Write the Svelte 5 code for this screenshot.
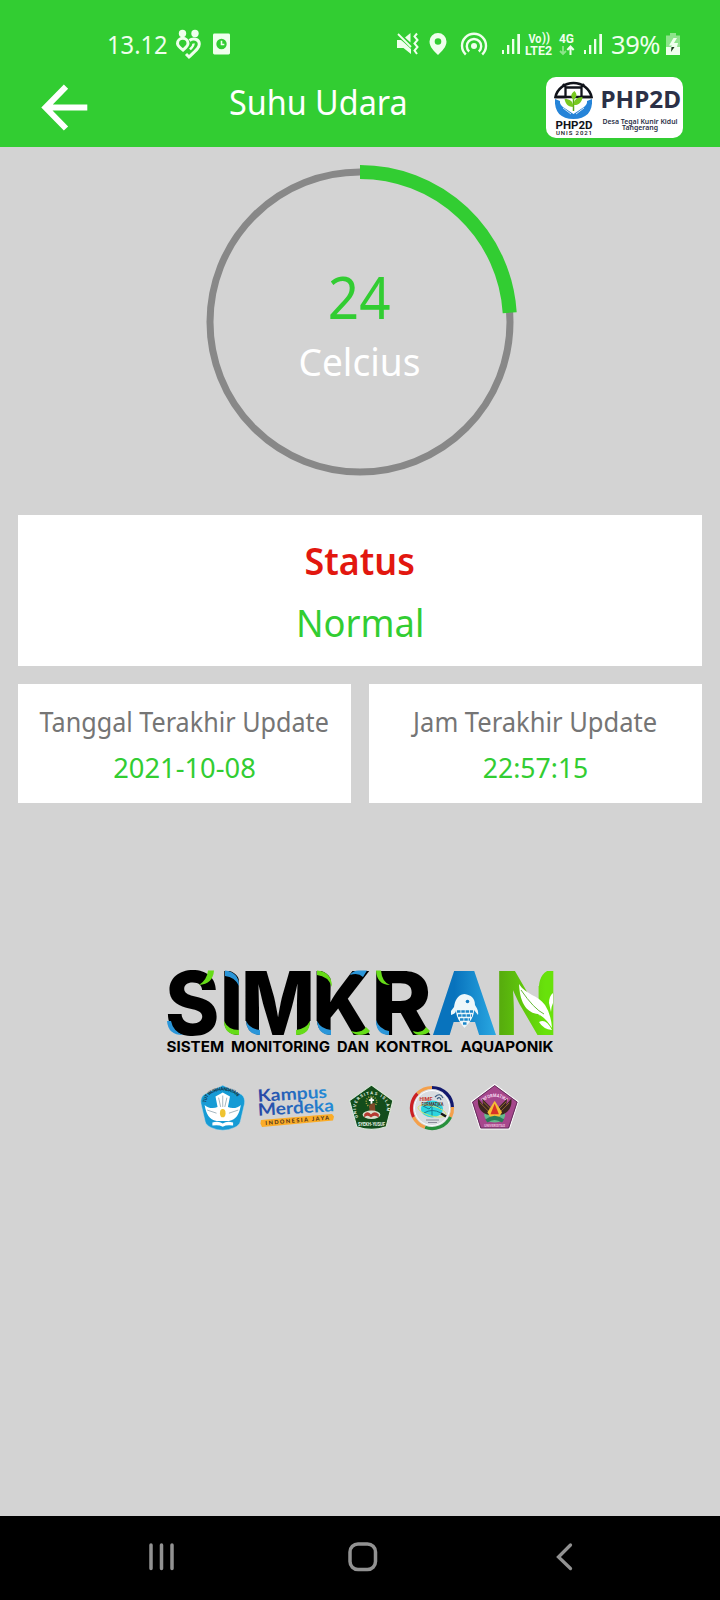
<script>
  const percent = 24;
  const radius = 150;
  const length = 2 * Math.PI * radius;

  const updates = [
    { label: 'Tanggal Terakhir Update', value: '2021-10-08', kind: 'date' },
    { label: 'Jam Terakhir Update', value: '22:57:15', kind: 'time' }
  ];

  const tagline = [
    { text: 'SISTEM', x: 166.5, width: 57.5 },
    { text: 'MONITORING', x: 231, width: 99 },
    { text: 'DAN', x: 337, width: 32 },
    { text: 'KONTROL', x: 375.5, width: 77 },
    { text: 'AQUAPONIK', x: 460.5, width: 93 }
  ];
</script>

{#snippet signal()}
  <svg class="signal" viewBox="0 0 20 22" width="20" height="22">
    <rect x="1" y="17" width="2" height="4" />
    <rect x="6" y="12" width="2.3" height="9" />
    <rect x="11" y="6" width="2.3" height="15" />
    <rect x="16.3" y="1" width="2.7" height="20" />
  </svg>
{/snippet}

<div class="screen">
  <header>
    <div class="status-bar">
      <span class="clock">13.12</span>
      <svg class="hearts" viewBox="0 0 28 32" width="28" height="32">
        <circle cx="8.5" cy="4.5" r="3.7" fill="#efffed" />
        <circle cx="21" cy="4.5" r="3.7" fill="#efffed" />
        <path d="M9 21C5.500 18.500 3.500 17 3.500 14.500A5.200 5.200 0 0 1 14 14.500C14 17 12 18.500 9 21ZM15.500 11.500C18.500 9 25.300 9.500 25.300 15C25.300 18.500 23 20.500 15 28L12 25" fill="none" stroke="#efffed" stroke-width="3" />
        <path d="M16 20.500C18 18.500 19.800 17 19.500 14.500" fill="none" stroke="#efffed" stroke-width="2.400" />
      </svg>
      <svg class="card-icon" viewBox="0 0 18 22" width="17" height="22">
        <rect width="18" height="22" rx="1.500" fill="#efffed" />
        <circle cx="9" cy="11" r="5.500" fill="#32cd32" />
        <path d="M9 7.500V11.500H12" fill="none" stroke="#efffed" stroke-width="1.700" />
      </svg>

      <svg class="mute" viewBox="0 0 24 24" width="24" height="24">
        <path d="M1 8H5L8 10.500L15 17V22L7.500 16H1ZM9 5.500L14.500 1V10.500Z" fill="#efffed" />
        <path d="M2 2L15 15" stroke="#efffed" stroke-width="1.800" />
        <path d="M21 1.500L18.500 4.500L21.500 8L18.500 11.500L21.500 15L18.500 18.500L21 22" fill="none" stroke="#efffed" stroke-width="2" />
      </svg>
      <svg class="pin" viewBox="0 0 18 22" width="18" height="22">
        <path fill-rule="evenodd" d="M9 0A8.500 8.500 0 0 0 .5 8.500C.5 14 5 18 9 22C13 18 17.500 14 17.500 8.500A8.500 8.500 0 0 0 9 0ZM9 5.200A3.300 3.300 0 1 1 9 11.800A3.300 3.300 0 0 1 9 5.200Z" fill="#efffed" />
      </svg>
      <svg class="hotspot" viewBox="0 0 28 24" width="28" height="24">
        <circle cx="14" cy="14" r="3" fill="#efffed" />
        <path d="M9.200 19.500A7.200 7.200 0 1 1 18.800 19.500M5.800 22.500A12 12 0 1 1 22.200 22.500" fill="none" stroke="#efffed" stroke-width="2.400" />
      </svg>
      {@render signal()}
      <svg class="volte" viewBox="0 0 28 24" width="28" height="24">
        <text x="3.500" y="10.500" textLength="13" lengthAdjust="spacingAndGlyphs">Vo</text>
        <text x="17" y="10" textLength="8" lengthAdjust="spacingAndGlyphs">))</text>
        <text x="0" y="22.500" textLength="27" lengthAdjust="spacingAndGlyphs">LTE2</text>
      </svg>
      <svg class="fourg" viewBox="0 0 16 24" width="16" height="24">
        <text x="0" y="10.500" textLength="15" lengthAdjust="spacingAndGlyphs">4G</text>
        <path d="M4 14V22M1 19L4 22L7 19" fill="none" stroke="#8ee48c" stroke-width="1.800" />
        <path d="M11.500 23V14.500M8.300 18L11.500 14.500L14.700 18" fill="none" stroke="#efffed" stroke-width="2" />
      </svg>
      {@render signal()}
      <span class="battery-text">39%</span>
      <svg class="battery" viewBox="0 0 14 22" width="14" height="22">
        <path d="M4 0H10V2.500H14V14H0V2.500H4Z" fill="#8ee48c" />
        <path d="M0 14H14V22H0Z" fill="#efffed" />
        <path d="M7.500 5L3 12.500H6L5 14H11L12 10H8L11 5Z" fill="#efffed" />
        <path d="M5.500 14H8.500L5 19Z" fill="#173917" />
      </svg>
    </div>

    <div class="app-bar">
      <svg class="back" viewBox="0 0 48 48" width="48" height="48" aria-label="Kembali">
        <path d="M26 2.700L5.500 23.600L26 44.500M5.500 23.600H47.300" fill="none" stroke="#fff" stroke-width="6" />
      </svg>
      <h1>Suhu Udara</h1>
      <svg class="badge" viewBox="546 77 137 61" width="137" height="61">
        <rect x="546" y="77" width="137" height="61" rx="10" fill="#fff" />
        <path d="M555.500 97A18.300 17 0 0 1 591.500 97Z" fill="#fff" stroke="#10131a" stroke-width="2.600" />
        <path d="M555 97H565.500V87.500H581.500V97H592M566 87.500L563 84M581 87.500L584 84" fill="none" stroke="#10131a" stroke-width="2.300" />
        <path d="M555 99C554 112 561 119 573.500 119C586 119 593 112 592 99L587 101C587.500 105 584 107 581 109L573.500 114L566 109C563 107 559.500 105 560 101Z" fill="#2584d8" />
        <path d="M563 108L571 114M584 108L576 114M567 107L573 112M580 107L574 112" stroke="#fff" stroke-width=".8" />
        <path d="M573.500 111V98" stroke="#56a51c" stroke-width="1.500" />
        <path d="M573.500 107C567 107 565.500 103 564.500 99C570 99 573 101 573.500 107ZM573.500 105C574 99 577 97.500 582.500 97C582 102 579 105.500 573.500 105ZM573.500 100C570 96 571 94 574.500 91C577.500 94.500 577 97 573.500 100Z" fill="#78c920" />
        <text class="emblem" x="555.500" y="128.500" font-size="11.500" textLength="37" lengthAdjust="spacingAndGlyphs">PHP2D</text>
        <text class="emblem thin" x="556" y="134.600" font-size="6" textLength="36" lengthAdjust="spacing">UNIS 2021</text>
        <text class="navy" x="600.500" y="107.500" font-size="23.500" textLength="80.500" lengthAdjust="spacingAndGlyphs">PHP2D</text>
        <text class="navy small" x="602.500" y="123.500" font-size="7.200" textLength="75" lengthAdjust="spacingAndGlyphs">Desa Tegal Kunir Kidul</text>
        <text class="navy small" x="622" y="130" font-size="7.200" textLength="36" lengthAdjust="spacingAndGlyphs">Tangerang</text>
      </svg>
    </div>
  </header>

  <main>
    <section class="gauge">
      <svg viewBox="0 0 314 314" width="314" height="314">
        <circle cx="157" cy="157" r={radius} fill="none" stroke="#888" stroke-width="7" />
        <circle cx="157" cy="157" r={radius} fill="none" stroke="#32cd32" stroke-width="14" stroke-dasharray="{(length * percent) / 100} {length}" transform="rotate(-90 157 157)" />
      </svg>
      <div class="reading">
        <strong>{percent}</strong>
        <span>Celcius</span>
      </div>
    </section>

    <section class="card status">
      <h2>Status</h2>
      <p>Normal</p>
    </section>

    <div class="updates">
      {#each updates as item}
        <section class="card update {item.kind}">
          <h3>{item.label}</h3>
          <p>{item.value}</p>
        </section>
      {/each}
    </div>

    <footer>
      <svg viewBox="160 964 400 94" width="400" height="94">
        <defs>
          <linearGradient id="aq" gradientUnits="userSpaceOnUse" x1="432" x2="496" y1="0" y2="0"><stop offset=".35" stop-color="#0873bd" /><stop offset="1" stop-color="#2aa8e2" /></linearGradient>
          <linearGradient id="leaf" x1="0" x2="1"><stop offset=".1" stop-color="#57ad0d" /><stop offset=".8" stop-color="#68e20b" /></linearGradient>
        </defs>
        <g class="word">
          <text x="165" y="1034.500" textLength="54.500" lengthAdjust="spacingAndGlyphs">S</text>
          <text x="219.500" y="1034.500" textLength="24" lengthAdjust="spacingAndGlyphs">I</text>
          <text x="241" y="1034.500" textLength="74" lengthAdjust="spacingAndGlyphs">M</text>
          <text x="312" y="1034.500" textLength="60" lengthAdjust="spacingAndGlyphs">K</text>
          <text x="371" y="1034.500" textLength="61" lengthAdjust="spacingAndGlyphs">R</text>
          <path class="inset" d="M464.500 974L448 1022H481Z" />
          <text class="blue" x="431" y="1034.500" textLength="67" lengthAdjust="spacingAndGlyphs">A</text>
          <text class="green" x="494.500" y="1034.500" textLength="63.500" lengthAdjust="spacingAndGlyphs">N</text>
        </g>
        <g fill="#d3d3d3">
          <path d="M226 969H241V986Q239 972 226 970.300Z" />
          <path d="M222 1021H224Q224.500 1034 239 1035.300V1037H222Z" />
          <path d="M244 1021H246Q247 1034 261 1035.300V1037H244Z" />
          <path d="M312 1021H310Q309 1034 295 1035.300V1037H312Z" />
          <path d="M318 969H333V987Q331 972 318 970.300Z" />
          <path d="M315 1021H317Q318 1034 332 1035.300V1037H315Z" />
          <path d="M374 1021H376Q377 1034 391 1035.300V1037H374Z" />
          <path d="M537 969H552Q540 972 539 986H537Z" />
        </g>
        <g fill="#2b96d9">
          <path d="M167 1021H171Q173 1031 183 1035Q168 1035 167 1021Z" />
          <path d="M225 970.500Q239 972 239 986Q235 977 225 976Z" />
          <path d="M246 1021Q250 1029 260 1030V1035Q247 1035 246 1021Z" />
          <path d="M350 975Q353 970 360 970.500H367L363 977Q358 972 350 975Z" />
          <path d="M317 1021Q321 1029 331 1030V1035Q318 1035 317 1021Z" />
          <path d="M376 1020Q379 1029 389 1031V1035Q376 1035 376 1020Z" />
        </g>
        <g fill="#66dc18">
          <path d="M208 970.500H214Q213 984 199 985Q207 980 208 970.500Z" />
          <path d="M224 1021Q228 1030 239 1030V1035Q224 1035 224 1021Z" />
          <path d="M310 1021Q306 1029 296 1030V1035Q310 1035 310 1021Z" />
          <path d="M317 970.500Q332 972 332 987Q328 976 317 975Z" />
          <path d="M351 1031Q361 1034 366 1027L370 1031Q367 1035 359 1035Q353 1034 351 1031Z" />
          <path d="M376 970.500H381Q382 982 390 985Q377 985 376 970.500Z" />
          <path d="M413 1031Q422 1034 426 1027L430 1031Q427 1035 419 1035Q414 1034 413 1031Z" />
        </g>
        <path d="M464.500 994C457 995 455 1001 454 1007L451 1011V1015C455 1014 456 1012 456 1010C456 1017 460 1023 464.500 1028C469 1023 474 1018 474 1010L478 1015C479 1010 476 1007 475 1005C475 998 471 995 464.500 994Z" fill="#eef7fa" />
        <circle cx="467.500" cy="1001.500" r="1.800" fill="#147dc3" />
        <path d="M457 1011.500H473M458 1015.500H472M460 1019.500H470M463 1023.500H467" stroke="#1d86c8" stroke-width="2.400" stroke-dasharray="3.500 .8" />
        <path d="M519 984C520 1005 528 1013 538 1014Q545 1017 552 1028Q551 1014 545 1005C538 995 526 995 519 984ZM539 1022Q546 1018 552 1030Q543 1029 539 1022ZM549 1003Q549 996 553 993V1003Q551 1007 551 1012Z" fill="#fff" />
        <path d="M521 990Q534 1009 544 1014" fill="none" stroke="#68ba39" stroke-width="1" />
        {#each tagline as word}
          <text class="tagline" x={word.x} y="1052.300" textLength={word.width} lengthAdjust="spacingAndGlyphs">{word.text}</text>
        {/each}
      </svg>

      <div class="partners">
        <svg viewBox="201 1085 42.500 46" width="44" height="48">
          <path d="M222 1086L240 1095Q244 1098 243 1104L239 1121Q238 1125 233 1127Q222 1132 211 1127Q206 1125 205 1121L201 1104Q200 1098 204 1095Z" fill="#169bd5" stroke="#c5dbe5" stroke-width=".5" />
          <path id="arc1" d="M206 1103Q207 1092 222 1091Q237 1092 238 1103" fill="none" />
          <text font-size="4.500" class="seal" fill="#17364b"><textPath href="#arc1" textLength="38">TUT WURI HANDAYANI</textPath></text>
          <path d="M222 1093L215 1097L217 1107C213 1109 207 1108 204.500 1105C206 1114 209 1119 216 1120.500H228C235 1119 238 1114 239.500 1105C237 1108 231 1109 227 1107L229 1097Z" fill="#fff" />
          <path d="M218 1098L220 1107M222 1096V1107M226 1098L224 1107M207 1110L216 1113M237 1110L228 1113" stroke="#849ba8" stroke-width=".7" />
          <ellipse cx="222" cy="1113" rx="2.700" ry="4" fill="#efc331" />
          <path d="M212 1122Q218 1120 222 1123Q226 1120 232 1122V1125Q226 1124 222 1126Q218 1124 212 1125Z" fill="#fff" />
        </svg>

        <svg class="kampus" viewBox="256 1084 80 48" width="80" height="48">
          <defs><linearGradient id="km" x1="0" x2="1"><stop stop-color="#2846a4" /><stop offset="1" stop-color="#238cd7" /></linearGradient></defs>
          <g transform="rotate(-3.500 258 1103)">
            <text x="257" y="1101.800" font-size="17" fill="url(#km)" textLength="69.500" lengthAdjust="spacingAndGlyphs">Kampus</text>
            <text x="256.500" y="1115.800" font-size="17" fill="url(#km)" textLength="76" lengthAdjust="spacingAndGlyphs">Merdeka</text>
          </g>
          <path d="M260 1120L331 1114L333 1116.500L332 1120.500L261 1127L259.500 1123.500Z" fill="#fbac27" />
          <text class="jaya" transform="translate(264.500 1125) rotate(-4.800)" font-size="5.600" textLength="64" lengthAdjust="spacing">INDONESIA JAYA</text>
        </svg>

        <svg viewBox="349.500 1085 44 46" width="46" height="48">
          <path d="M371 1086L391.500 1101L385 1126Q371 1131 357 1126L350 1101Z" fill="#134d1b" stroke="#dbe8d9" stroke-width="1" />
          <path id="arc2" d="M358.500 1117C352 1104 360 1095.500 371 1095C382 1095.500 390 1104 383.500 1117" fill="none" />
          <text font-size="4" class="seal" fill="#e9f5e9"><textPath href="#arc2" textLength="56">UNIVERSITAS ISLAM</textPath></text>
          <text x="358" y="1125" font-size="4.300" class="seal" fill="#e9f5e9" textLength="26" lengthAdjust="spacingAndGlyphs">SYEKH-YUSUF</text>
          <circle cx="371" cy="1102" r="5" fill="none" stroke="#a9a340" stroke-width="1.500" stroke-dasharray="1 1.200" />
          <path d="M371 1098V1104M368.500 1100.500H373.500" stroke="#fff" stroke-width="1.800" />
          <path d="M369 1105L374 1103L375 1113L369 1115Z" fill="#804829" />
          <ellipse cx="371" cy="1114.500" rx="8.500" ry="4" fill="#d9e1ce" />
          <path d="M364 1114Q367 1110 370.500 1114Q374 1110 378 1114V1117Q374 1114 370.500 1117Q367 1114 364 1117Z" fill="#b53c32" />
        </svg>

        <svg viewBox="408 1084 46 48" width="46" height="48">
          <circle cx="431" cy="1108" r="20" fill="#d9dce0" />
          <g fill="none" stroke-width="3.200">
            <path d="M431 1087.500A20.500 20.500 0 0 1 451.500 1108" stroke="#12186d" />
            <path d="M451.500 1107A20.500 20.500 0 0 1 449.500 1117" stroke="#f4a04b" />
            <path d="M449.500 1117A20.500 20.500 0 0 1 424 1127.300" stroke="#27903c" />
            <path d="M424 1127.300A20.500 20.500 0 0 1 412.500 1117" stroke="#f4a04b" />
            <path d="M412.500 1117A20.500 20.500 0 0 1 416.500 1093.500" stroke="#cb2023" />
            <path d="M416.500 1093.500A20.500 20.500 0 0 1 431 1087.500" stroke="#f4a04b" />
          </g>
          <circle cx="431" cy="1108" r="17.500" fill="none" stroke="#fff" stroke-width="1" />
          <ellipse cx="431" cy="1109" rx="11" ry="8.500" fill="#2ed5df" />
          <path d="M422 1106L428 1109L433 1104L440 1109M423 1113Q431 1108 440 1113M431 1107V1116" fill="none" stroke="#177c94" stroke-width="1" />
          <ellipse cx="431" cy="1111" rx="14.500" ry="5" fill="none" stroke="#d6e466" stroke-width=".8" transform="rotate(15 431 1111)" />
          <text x="418.500" y="1101" font-size="5" class="seal" fill="#c63728" textLength="13" lengthAdjust="spacingAndGlyphs">HIMF</text>
          <text x="420.500" y="1105.500" font-size="4.600" class="seal" fill="#5c3737" textLength="22" lengthAdjust="spacingAndGlyphs">FORMATIKA</text>
          <path d="M434 1097Q439 1092 442 1098M436 1099Q439 1096 440 1100" fill="none" stroke="#385a80" stroke-width="1.200" />
          <path d="M440 1113.500L445 1116.500" stroke="#151515" stroke-width="2.600" />
          <path d="M425 1120H438M427 1122.500H436" stroke="#778" stroke-width=".8" />
        </svg>

        <svg viewBox="472.500 1085 45.500 46" width="48" height="48">
          <path d="M494 1085.500L516.500 1102L508 1128H480L471.800 1102Z" fill="#a6478c" stroke="#fff" stroke-width="1" />
          <path d="M494 1086.500L515.500 1102.300L507.300 1127.200H480.700L472.800 1102.300Z" fill="none" stroke="#552650" stroke-width=".8" />
          <path id="arc3" d="M482.500 1102Q494 1093 505.500 1102" fill="none" />
          <text font-size="4.600" class="seal" fill="#f6d9ef"><textPath href="#arc3" textLength="25" lengthAdjust="spacingAndGlyphs">INFORMATIKA</textPath></text>
          <ellipse cx="494" cy="1115" rx="10" ry="7" fill="#65b98c" />
          <path d="M492 1115C482 1115 477 1108 478 1099L483 1105L482 1099L490 1107ZM496 1115C506 1115 511 1108 510 1099L505 1105L506 1099L498 1107Z" fill="#3b251f" />
          <path d="M480 1103L489 1112M508 1103L499 1112M483 1102L491 1110M505 1102L497 1110" stroke="#a47533" stroke-width=".8" />
          <path d="M494 1101L501 1112L498 1117H490L487 1112Z" fill="#f5bf36" />
          <path d="M494 1104L498 1114H490Z" fill="#d83226" />
          <path d="M485 1119Q494 1112 503 1119L501 1122Q494 1117 487 1122Z" fill="#287d58" />
          <text x="484" y="1125.800" font-size="4.200" class="seal" fill="#e9bddd" textLength="20" lengthAdjust="spacingAndGlyphs">UNIVERSITAS</text>
        </svg>
      </div>
    </footer>
  </main>

  <nav>
    <svg viewBox="0 0 30 30" width="30" height="30"><path d="M3 3V26.500M13.500 3V26.500M24 3V26.500" stroke="#929292" stroke-width="3.500" stroke-linecap="round" /></svg>
    <svg class="home" viewBox="0 0 30 30" width="30" height="30"><rect x="2" y="2" width="25.500" height="25.500" rx="8" fill="none" stroke="#929292" stroke-width="3.500" /></svg>
    <svg viewBox="0 0 30 30" width="30" height="30"><path d="M19.500 3L7.500 15L19.500 26.500" fill="none" stroke="#929292" stroke-width="3.300" stroke-linecap="round" /></svg>
  </nav>
</div>

<style>
  :global(body) { margin: 0; }
  .screen {
    width: 720px;
    height: 1600px;
    display: flex;
    flex-direction: column;
    background: #d3d3d3;
    font-family: "Noto Sans", "Open Sans", sans-serif;
    overflow: hidden;
  }
  svg { display: block; flex: none; overflow: visible; }
  h1, h2, h3, p { margin: 0; font-weight: 400; white-space: nowrap; }
  header { height: 147px; background: #32cd32; color: #fff; flex: none; }
  .status-bar { height: 77px; display: flex; align-items: flex-start; color: #efffed; }
  .clock { width: 62px; margin: 27px 0 0 107px; font-size: 25.5px; line-height: 34px; font-weight: 370; transform: scaleX(0.93); transform-origin: left; }
  .hearts { margin: 29px 0 0 5px; }
  .card-icon { margin: 33px 0 0 10.5px; }
  .mute { margin: 32px 0 0 166.5px; }
  .pin { margin: 33px 0 0 8.5px; }
  .hotspot { margin: 32px 0 0 13.5px; }
  .signal { margin: 33px 0 0 13px; fill: #efffed; }
  .volte { margin: 32px 0 0 4px; }
  .fourg { margin: 32px 0 0 6px; }
  .fourg + .signal { margin-left: 8px; }
  .volte text, .fourg text { font: 700 12.5px Roboto, sans-serif; fill: #efffed; }
  .battery-text { width: 51px; margin: 27px 0 0 8px; font-size: 25.5px; line-height: 34px; font-weight: 370; letter-spacing: -0.4px; }
  .battery { margin: 33px 0 0 3.5px; }
  .app-bar { height: 70px; display: flex; align-items: flex-start; }
  .back { margin: 7px 0 0 40px; }
  h1 { width: 184px; margin: 2px 0 0 141px; font-size: 34px; line-height: 46px; transform: scaleX(0.951); transform-origin: left; }
  .badge { margin-left: 133px; }
  .emblem { font-family: Roboto, sans-serif; font-weight: 700; fill: #10131a; }
  .thin { font-weight: 500; }
  .navy { font-family: "Noto Sans", sans-serif; font-weight: 700; fill: #2b3047; }
  .small { font-weight: 600; }

  main { flex: 1; display: flex; flex-direction: column; align-items: center; }
  .gauge { display: grid; margin-top: 18px; width: 314px; height: 314px; }
  .gauge > * { grid-area: 1 / 1; }
  .reading { display: flex; flex-direction: column; align-items: center; padding-top: 92px; }
  .reading strong { font-size: 58px; line-height: 80px; font-weight: 400; color: #32cd32; transform: translateX(-1px) scaleX(0.945); }
  .reading span { font-size: 38px; line-height: 52px; color: #fff; margin-top: -2px; transform: translateX(-1px) scaleX(0.975); }
  .card { background: #fff; display: flex; flex-direction: column; align-items: center; box-sizing: border-box; }
  .status { width: 684px; height: 151px; margin-top: 36px; padding-top: 19px; }
  .status h2 { color: #e2170f; font-size: 37.5px; line-height: 54px; font-weight: 600; transform: scaleX(0.956); }
  .status p { color: #32cd32; font-size: 38px; line-height: 54px; margin-top: 7px; transform: scaleX(0.957); }
  .updates { display: grid; grid-template-columns: 333px 333px; gap: 18px; margin-top: 18px; }
  .update { height: 119px; padding-top: 19.5px; }
  .update h3 { color: #757575; font-size: 27px; line-height: 36px; transform: scaleX(0.932); }
  .time h3 { transform: scaleX(0.945); }
  .update p { color: #32cd32; font-size: 27px; line-height: 36px; margin-top: 10px; transform: scaleX(1.012); }
  .time p { transform: scaleX(0.985); }
  footer { margin-top: 161px; display: flex; flex-direction: column; align-items: center; }
  .word text { font: 800 88px Inter, sans-serif; }
  .word .blue { fill: url(#aq); }
  .word .green { fill: url(#leaf); }
  .inset { fill: url(#aq); }
  .tagline { font: 700 14.8px Inter, sans-serif; }
  .partners { display: flex; margin-top: 26px; gap: 12px; }
  .partners svg:nth-child(4) { margin-left: 2px; }
  .partners svg:nth-child(5) { margin-left: 5px; }
  .kampus text { font-family: Lato, sans-serif; font-weight: 700; }
  .kampus .jaya { font-weight: 900; fill: #54371c; }
  .seal { font-family: Roboto, sans-serif; font-weight: 700; }
  nav { height: 84px; flex: none; background: #000; display: flex; padding: 26px 139px 0 146px; box-sizing: border-box; justify-content: space-between; align-items: flex-start; }
  nav svg:first-child { margin-left: 2px; }
  .home { margin-right: 3px; }
</style>
